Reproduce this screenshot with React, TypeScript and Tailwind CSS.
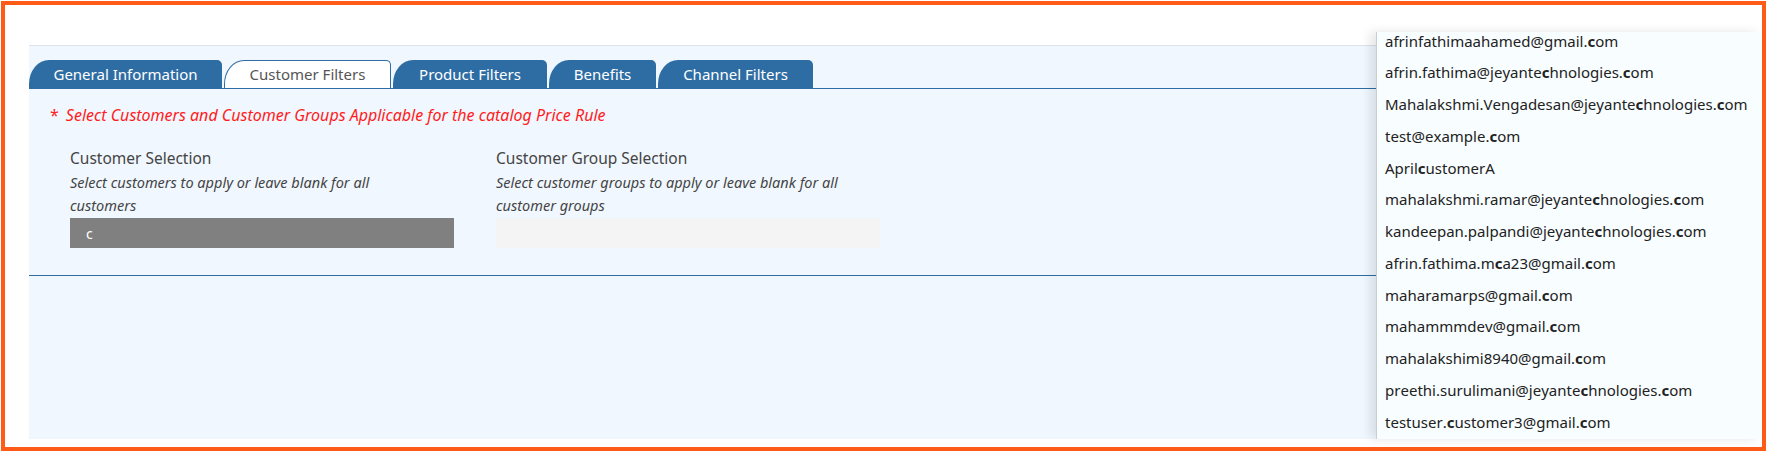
const tabs = [
  { label: "General Information", w: "w-[193px]", active: false },
  { label: "Customer Filters", w: "w-[167px]", active: true },
  { label: "Product Filters", w: "w-[154px]", active: false },
  { label: "Benefits", w: "w-[107px]", active: false },
  { label: "Channel Filters", w: "w-[155px]", active: false },
];

const customers = [
  "afrinfathimaahamed@gmail.com",
  "afrin.fathima@jeyantechnologies.com",
  "Mahalakshmi.Vengadesan@jeyantechnologies.com",
  "test@example.com",
  "AprilcustomerA",
  "mahalakshmi.ramar@jeyantechnologies.com",
  "kandeepan.palpandi@jeyantechnologies.com",
  "afrin.fathima.mca23@gmail.com",
  "maharamarps@gmail.com",
  "mahammmdev@gmail.com",
  "mahalakshimi8940@gmail.com",
  "preethi.surulimani@jeyantechnologies.com",
  "testuser.customer3@gmail.com",
];

// bold every "c" that matches the typed search
function Highlight({ text }: { text: string }) {
  return (
    <>
      {text.split("").map((ch, i) =>
        ch === "c" ? (
          <b key={i} className="font-bold">
            {ch}
          </b>
        ) : (
          <span key={i}>{ch}</span>
        )
      )}
    </>
  );
}

export default function App() {
  return (
    <div className="w-[1768px] h-[452px] bg-white font-['Noto_Sans',sans-serif]">
      <div className="relative ml-[1px] mt-[1px] w-[1765px] h-[450px] border-4 border-[#fd5b17] pl-[24px] pr-[24px] pt-[40px] pb-[8px]">
        {/* Tab panel */}
        <div className="h-full border-t border-[#dce3ea] bg-[#f0f7fe]">
          <div className="flex items-end gap-[2px] border-b border-[#2e6da4] pt-[14px]">
            {tabs.map((tab) => (
              <div
                key={tab.label}
                className={`${tab.w} h-[28px] flex items-center justify-center rounded-tl-[20px_24px] rounded-tr-[5px] text-[15px] ${
                  tab.active
                    ? "bg-white border border-b-0 border-[#2e6da4] text-[#555]"
                    : "bg-[#2e6da4] text-white"
                }`}
              >
                {tab.label}
              </div>
            ))}
          </div>

          <p className="mt-[15px] ml-[21px] text-[16px] leading-[22px] text-[#ff1c1c]">
            <span>*</span>
            <span className="ml-[7px] italic">
              Select Customers and Customer Groups Applicable for the catalog Price Rule
            </span>
          </p>

          {/* Selection fields */}
          <div className="mt-[21px] ml-[41px] flex gap-[42px]">
            <div className="w-[384px] text-[#444]">
              <div className="text-[15.5px] leading-[23px]">Customer Selection</div>
              <div className="pt-[1px] text-[14.5px] leading-[23px] italic whitespace-nowrap">
                <span className="block">Select customers to apply or leave blank for all</span>
                <span className="block">customers</span>
              </div>
              <div className="mt-[1px] h-[30px] bg-[#808080] pl-[16px] flex items-center text-[14px] text-white">
                c
              </div>
            </div>
            <div className="w-[384px] text-[#444]">
              <div className="text-[15.5px] leading-[23px]">Customer Group Selection</div>
              <div className="pt-[1px] text-[14.5px] leading-[23px] italic whitespace-nowrap">
                <span className="block">Select customer groups to apply or leave blank for all</span>
                <span className="block">customer groups</span>
              </div>
              <div className="mt-[1px] h-[30px] bg-[#f4f4f4]" />
            </div>
          </div>

          <div className="mt-[27px] border-t border-[#2e6da4]" />
        </div>

        {/* Autocomplete dropdown */}
        <div className="absolute right-0 top-[27px] w-[386px] h-[407px] overflow-hidden bg-[#f8fdff] border-l border-[#c9ced3] shadow-[-6px_0_10px_rgba(0,0,0,0.10)]">
          <ul className="-mt-[7px] text-[15px] text-[#222]">
            {customers.map((c) => (
              <li key={c} className="h-[31.75px] flex items-center pl-[8px] whitespace-nowrap">
                <Highlight text={c} />
              </li>
            ))}
          </ul>
        </div>
      </div>
    </div>
  );
}
